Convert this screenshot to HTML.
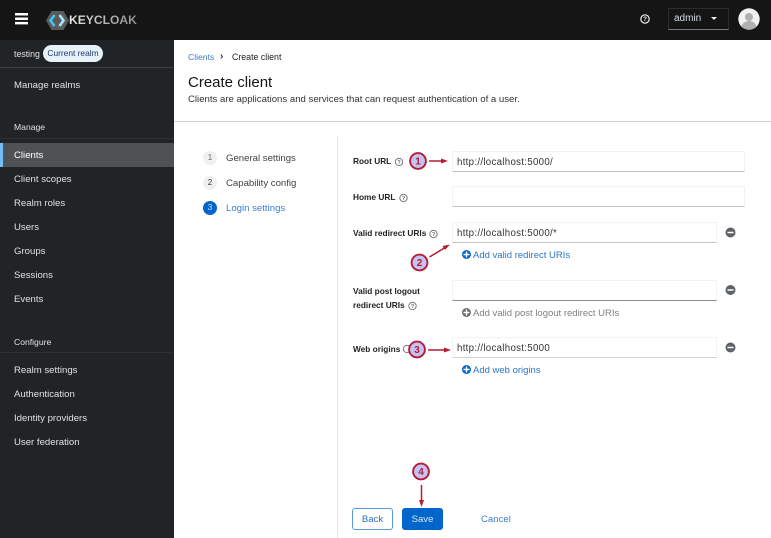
<!DOCTYPE html>
<html><head><meta charset="utf-8">
<style>
html,body{margin:0;padding:0;width:771px;height:538px;overflow:hidden;background:#fff;font-family:"Liberation Sans",sans-serif;}
.a{position:absolute;white-space:nowrap;line-height:12px;}
.nav{position:absolute;left:14px;font-size:9.6px;color:#e0e0e0;line-height:12px;white-space:nowrap;}
.lbl{position:absolute;left:353px;font-size:8.3px;font-weight:bold;color:#222;line-height:14px;white-space:nowrap;}
.inp{position:absolute;left:452px;box-sizing:border-box;border:1px solid #f2f2f2;border-bottom:1px solid #c4c4c4;font-size:9.7px;color:#333;line-height:21px;padding-left:4px;letter-spacing:.3px;}
.link{position:absolute;font-size:9.5px;color:#2b75c8;line-height:12px;white-space:nowrap;}
</style></head>
<body>
<div class="a" style="left:0;top:0;width:771px;height:40px;background:#151515"></div>
<div class="a" style="left:0;top:40px;width:174px;height:498px;background:#212427"></div>

<!-- hamburger -->
<svg class="a" style="left:15px;top:13px" width="13" height="12" viewBox="0 0 13 12">
<rect x="0" y="0" width="13" height="2.500" fill="#fff"/>
<rect x="0" y="4.500" width="13" height="2.500" fill="#fff"/>
<rect x="0" y="8.900" width="13" height="2.500" fill="#fff"/>
</svg>

<!-- logo -->
<svg class="a" style="left:45px;top:10px" width="26" height="21" viewBox="0 0 26 21">
<polygon points="1,10.5 6.500,1 18.500,1 24,10.5 18.500,20 6.500,20" fill="#5a5a5a"/>
<path d="M9.500,5 L5.500,10.500 L9.500,16" fill="none" stroke="#3fc4f7" stroke-width="2.600"/>
<path d="M14.500,5 L18.500,10.500 L14.500,16" fill="none" stroke="#a5e6fd" stroke-width="2.600"/>
</svg>
<div class="a" style="left:69px;top:13px;font-size:12.1px;font-weight:bold;line-height:15px;background:linear-gradient(90deg,#e8e8e8,#8c8c8c);-webkit-background-clip:text;background-clip:text;color:transparent">KEYCLOAK</div>

<!-- header right -->
<svg class="a" style="left:639px;top:13px" width="12" height="12" viewBox="0 0 12 12">
<circle cx="6" cy="6" r="4.200" fill="none" stroke="#eee" stroke-width="1.200"/>
<text x="6" y="8.200" font-size="6.500" font-weight="bold" fill="#eee" text-anchor="middle" font-family="Liberation Sans">?</text>
</svg>
<div class="a" style="left:668px;top:8px;width:61px;height:22px;box-sizing:border-box;border:1px solid #2c2c2c;border-bottom-color:#777"></div>
<div class="a" style="left:674px;top:13px;font-size:10px;color:#d6dbe4">admin</div>
<div class="a" style="left:711px;top:17px;width:0;height:0;border-left:3.500px solid transparent;border-right:3.500px solid transparent;border-top:3.500px solid #eee"></div>
<svg class="a" style="left:738px;top:8px" width="22" height="22" viewBox="0 0 22 22">
<defs><clipPath id="c"><circle cx="11" cy="11" r="10.700"/></clipPath></defs>
<circle cx="11" cy="11" r="10.700" fill="#f2f2f2"/>
<g clip-path="url(#c)" fill="#b0b0b0"><circle cx="11" cy="9" r="4"/><ellipse cx="11" cy="19.500" rx="7.500" ry="6.500"/></g>
</svg>

<!-- sidebar -->
<div class="nav" style="top:48px;font-size:8.800px">testing</div>
<div class="a" style="left:43px;top:45px;width:60px;height:17px;border-radius:9px;background:#e7f1fa;color:#1f3a66;font-size:8.400px;line-height:17px;text-align:center">Current realm</div>
<div class="a" style="left:0;top:67px;width:174px;height:1px;background:#3c3f42"></div>
<div class="nav" style="top:80px">Manage realms</div>
<div class="nav" style="top:121px;font-size:8.600px">Manage</div>
<div class="a" style="left:0;top:138px;width:174px;height:1px;background:#2f3235"></div>
<div class="a" style="left:0;top:143px;width:174px;height:24px;background:#4f5255"></div>
<div class="a" style="left:0;top:143px;width:3px;height:24px;background:#73bcf7"></div>
<div class="nav" style="top:150px;color:#fff">Clients</div>
<div class="nav" style="top:174px">Client scopes</div>
<div class="nav" style="top:198px">Realm roles</div>
<div class="nav" style="top:222px">Users</div>
<div class="nav" style="top:246px">Groups</div>
<div class="nav" style="top:270px">Sessions</div>
<div class="nav" style="top:294px">Events</div>
<div class="nav" style="top:336px;font-size:8.600px">Configure</div>
<div class="a" style="left:0;top:352px;width:174px;height:1px;background:#2f3235"></div>
<div class="nav" style="top:365px">Realm settings</div>
<div class="nav" style="top:389px">Authentication</div>
<div class="nav" style="top:413px">Identity providers</div>
<div class="nav" style="top:437px">User federation</div>

<!-- page header -->
<div class="a" style="left:188px;top:51px;font-size:8.600px;color:#3b7fc9">Clients</div>
<div class="a" style="left:220px;top:51px;font-size:10px;font-weight:bold;color:#333">›</div>
<div class="a" style="left:232px;top:51px;font-size:8.800px;color:#222">Create client</div>
<div class="a" style="left:188px;top:74px;font-size:15px;color:#151515;line-height:18px">Create client</div>
<div class="a" style="left:188px;top:94px;font-size:9.600px;color:#333">Clients are applications and services that can request authentication of a user.</div>
<div class="a" style="left:174px;top:121px;width:597px;height:1px;background:#d2d2d2"></div>
<div class="a" style="left:337px;top:136px;width:1px;height:402px;background:#e4e4e4"></div>

<!-- wizard -->
<div class="a" style="left:203px;top:151px;width:14px;height:14px;border-radius:50%;background:#f0f0f0;color:#6a6e73;font-size:8px;line-height:14px;text-align:center">1</div>
<div class="a" style="left:226px;top:153px;font-size:9.600px;color:#3c3f42">General settings</div>
<div class="a" style="left:203px;top:176px;width:14px;height:14px;border-radius:50%;background:#f0f0f0;color:#333;font-size:8px;line-height:14px;text-align:center">2</div>
<div class="a" style="left:226px;top:178px;font-size:9.600px;color:#3c3f42">Capability config</div>
<div class="a" style="left:203px;top:201px;width:14px;height:14px;border-radius:50%;background:#06c;color:#cfe2f5;font-size:8px;line-height:14px;text-align:center">3</div>
<div class="a" style="left:226px;top:203px;font-size:9.600px;color:#3a7fcf">Login settings</div>

<!-- labels -->
<div class="lbl" style="top:154px">Root URL</div>
<div class="lbl" style="top:190px">Home URL</div>
<div class="lbl" style="top:226px">Valid redirect URIs</div>
<div class="lbl" style="top:284px">Valid post logout</div>
<div class="lbl" style="top:298px">redirect URIs</div>
<div class="lbl" style="top:342px">Web origins</div>

<!-- help icons -->
<svg class="a" style="left:0;top:0" width="771" height="538" viewBox="0 0 771 538">
<g fill="none" stroke="#6a6e73" stroke-width=".9">
<circle cx="399" cy="162" r="3.700"/><circle cx="403.500" cy="198" r="3.700"/><circle cx="433.500" cy="234" r="3.700"/><circle cx="412.500" cy="306" r="3.700"/><circle cx="407" cy="349" r="3.700"/>
</g>
<g font-family="Liberation Sans" font-size="5.500" fill="#6a6e73" text-anchor="middle" font-weight="bold">
<text x="399" y="164">?</text><text x="403.500" y="200">?</text><text x="433.500" y="236">?</text><text x="412.500" y="308">?</text>
</g>
</svg>

<!-- inputs -->
<div class="inp" style="top:151px;width:293px;height:21px">http://localhost:5000/</div>
<div class="inp" style="top:186px;width:293px;height:21px"></div>
<div class="inp" style="top:222px;width:265px;height:21px">http://localhost:5000/*</div>
<div class="inp" style="top:280px;width:265px;height:21px;border-bottom-color:#8a8d90"></div>
<div class="inp" style="top:337px;width:265px;height:21px;border-bottom-color:#d2d2d2">http://localhost:5000</div>

<!-- add links -->
<svg class="a" style="left:0;top:0" width="771" height="538" viewBox="0 0 771 538">
<g fill="#06c"><circle cx="466.500" cy="254.500" r="4.500"/><circle cx="466.500" cy="369.500" r="4.500"/></g>
<circle cx="466.500" cy="312.500" r="4.500" fill="#6a6e73"/>
<g stroke="#fff" stroke-width="1.400">
<path d="M463.500 254.500h6M466.500 251.500v6"/><path d="M463.500 312.500h6M466.500 309.500v6"/><path d="M463.500 369.500h6M466.500 366.500v6"/>
</g>
<g fill="#5f6368"><circle cx="730.500" cy="232.500" r="5"/><circle cx="730.500" cy="290" r="5"/><circle cx="730.500" cy="347.500" r="5"/></g>
<g stroke="#fff" stroke-width="1.400">
<path d="M727.500 232.500h6M727.500 290h6M727.500 347.500h6"/>
</g>
</svg>
<div class="link" style="left:473px;top:250px">Add valid redirect URIs</div>
<div class="link" style="left:473px;top:308px;color:#7c7f83">Add valid post logout redirect URIs</div>
<div class="link" style="left:473px;top:365px">Add web origins</div>

<!-- buttons -->
<div class="a" style="left:352px;top:508px;width:41px;height:22px;box-sizing:border-box;border:1px solid #5a9bdd;border-radius:3px;color:#2b6fc0;font-size:9.600px;line-height:22px;text-align:center">Back</div>
<div class="a" style="left:402px;top:508px;width:41px;height:22px;border-radius:3px;background:#06c;color:#d8e6f5;font-size:9.600px;line-height:24px;text-align:center">Save</div>
<div class="a" style="left:481px;top:514px;font-size:9.600px;color:#3a7fcf">Cancel</div>

<!-- annotations -->
<svg class="a" style="left:0;top:0" width="771" height="538" viewBox="0 0 771 538">
<g stroke="#b81c34" stroke-width="1.500" fill="none">
<path d="M429 161H443"/><path d="M429.500 257L446 247"/><path d="M428 350H446"/><path d="M421.500 485V503"/>
</g>
<g fill="#b81c34">
<polygon points="448,161 441,158.500 441,163.500"/>
<polygon points="450,244.500 442.500,246 445,250"/>
<polygon points="451,350 444,347.500 444,352.500"/>
<polygon points="421.500,507 419,500 424,500"/>
</g>
<g fill="#c3c4f4" stroke="#b81c34" stroke-width="1.900">
<circle cx="418" cy="161" r="7.900"/><circle cx="419.500" cy="262.500" r="7.900"/><circle cx="417" cy="349.500" r="7.900"/><circle cx="421" cy="471.500" r="7.900"/>
</g>
<g font-family="Liberation Sans" font-size="10" font-weight="bold" fill="#b81c34" text-anchor="middle">
<text x="418" y="164.500">1</text><text x="419.500" y="266">2</text><text x="417" y="353">3</text><text x="421" y="475">4</text>
</g>
</svg>
</body></html>
